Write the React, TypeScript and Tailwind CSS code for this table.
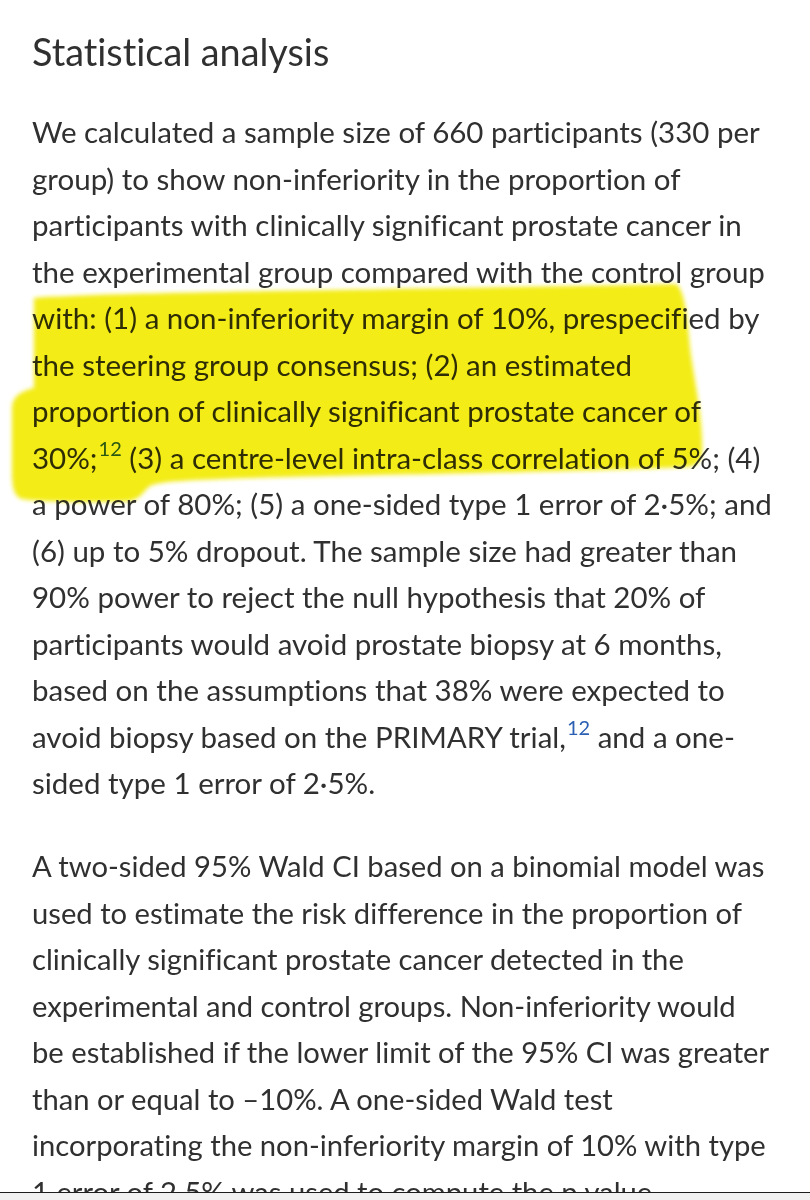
import React from "react";

const Sup = () => (
  <sup className="text-[20px] text-[#2b5fb3] align-baseline relative top-[-13px] ml-[1px]">12</sup>
);

const p1: React.ReactNode[] = [
  "We calculated a sample size of 660 participants (330 per",
  "group) to show non-inferiority in the proportion of",
  "participants with clinically significant prostate cancer in",
  "the experimental group compared with the control group",
  "with: (1) a non-inferiority margin of 10%, prespecified by",
  "the steering group consensus; (2) an estimated",
  "proportion of clinically significant prostate cancer of",
  <>
    30%;<Sup /> (3) a centre-level intra-class correlation of 5%; (4)
  </>,
  "a power of 80%; (5) a one-sided type 1 error of 2·5%; and",
  "(6) up to 5% dropout. The sample size had greater than",
  "90% power to reject the null hypothesis that 20% of",
  "participants would avoid prostate biopsy at 6 months,",
  "based on the assumptions that 38% were expected to",
  <>
    avoid biopsy based on the PRIMARY trial,<Sup /> and a one-
  </>,
  "sided type 1 error of 2·5%.",
];

const p2: string[] = [
  "A two-sided 95% Wald CI based on a binomial model was",
  "used to estimate the risk difference in the proportion of",
  "clinically significant prostate cancer detected in the",
  "experimental and control groups. Non-inferiority would",
  "be established if the lower limit of the 95% CI was greater",
  "than or equal to –10%. A one-sided Wald test",
  "incorporating the non-inferiority margin of 10% with type",
  "1 error of 2·5% was used to compute the p value.",
];

export default function App() {
  return (
    <div
      className="relative w-[810px] h-[1200px] overflow-hidden bg-white text-[#303030] [font-variant-ligatures:none]"
      style={{ fontFamily: 'Lato, "Open Sans", sans-serif' }}
    >
      <div className="px-[32px] pt-[28px]">
        <h2 className="text-[37.8px] leading-[48px] font-normal whitespace-nowrap">
          Statistical analysis
        </h2>
        <div className="mt-[33px] text-[29.5px] leading-[46.5px]">
          {p1.map((l, i) => (
            <div key={i} className="whitespace-nowrap">
              {l}
            </div>
          ))}
        </div>
        <div className="mt-[36.5px] text-[29.2px] leading-[46.5px]">
          {p2.map((l, i) => (
            <div key={i} className="whitespace-nowrap">
              {l}
            </div>
          ))}
        </div>
      </div>

      <svg
        className="absolute inset-0 pointer-events-none mix-blend-multiply"
        width="810"
        height="1200"
        viewBox="0 0 810 1200"
      >
        <defs>
          <filter id="soft" x="-5%" y="-5%" width="110%" height="110%">
            <feGaussianBlur stdDeviation="2.2" />
          </filter>
        </defs>
        <path
          filter="url(#soft)"
          fill="#f3ec12"
          d="M34 298 C 120 292, 400 290, 676 284 C 686 290, 688 330, 691 356 C 696 390, 703 420, 702 452 C 701 462, 696 466, 686 467 C 600 471, 420 474, 250 478 C 190 480, 160 481, 150 486 C 144 490, 142 498, 130 501 C 90 503, 40 502, 22 499 C 14 496, 12 488, 12 470 L 12 410 C 12 398, 18 392, 34 388 Z"
        />
      </svg>

      <div className="absolute left-0 right-0 bottom-0 h-[8px] bg-[#f1f1f1] border-t-[1.5px] border-[#1e1e1e]" />
    </div>
  );
}
